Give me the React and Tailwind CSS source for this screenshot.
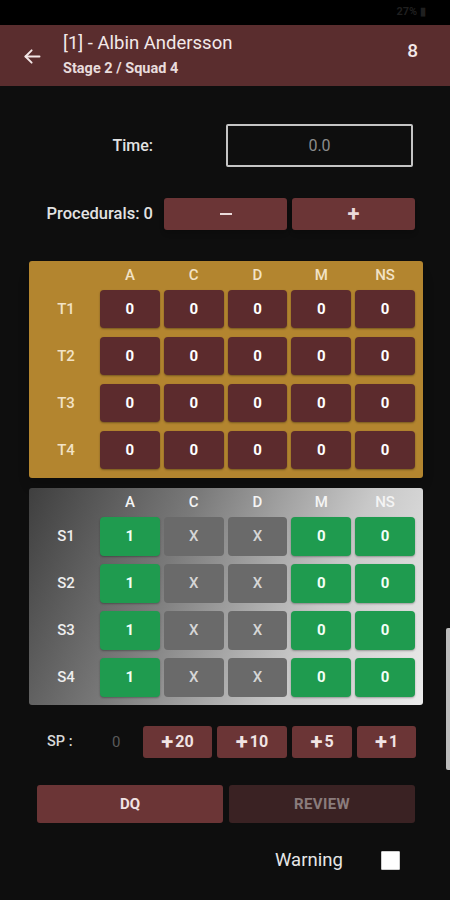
const cols = ['A', 'C', 'D', 'M', 'NS'];

const ArrowLeft = () => (
    <svg width="21" height="21" viewBox="0 0 24 24" fill="none" stroke="#f3e6e6" strokeWidth="2.2" strokeLinecap="round" strokeLinejoin="round">
        <path d="M20 12H4" />
        <path d="M11 5l-7 7 7 7" />
    </svg>
);

const App = () => {
    const targets = ['T1', 'T2', 'T3', 'T4'];
    const steel = ['S1', 'S2', 'S3', 'S4'];

    return (
        <div className="w-[450px] h-[900px] bg-[#0e0e0e] overflow-hidden relative font-['Roboto',sans-serif] text-white">
            {/* status bar */}
            <div className="h-[25px] bg-black flex items-center justify-end pr-[24px]">
                <span className="text-[11px] font-bold text-[#1f1f1f]">27% ▮</span>
            </div>

            {/* toolbar */}
            <div className="h-[61px] bg-[#5a2d2e] flex items-center">
                <div className="w-[63px] flex justify-center pl-[1px] pt-[1px]">
                    <ArrowLeft />
                </div>
                <div className="flex-1 flex flex-col -mt-[2px]">
                    <span className="text-[18.5px] font-normal leading-[24px] text-[#f3e9e9]">[1] - Albin Andersson</span>
                    <span className="text-[14.5px] font-bold leading-[18px] mt-[5px] text-[#e8dcdc]">Stage 2 / Squad 4</span>
                </div>
                <span className="text-[19px] font-medium pr-[32px] pb-[8px] text-[#f3e9e9]">8</span>
            </div>

            <div className="pt-[38px]">
                {/* time */}
                <div className="flex items-center">
                    <span className="w-[153px] text-right text-[16px] font-medium text-[#e2e2e2]">Time:</span>
                    <div className="ml-[73px] w-[187px] h-[43px] border-2 border-[#c4c4c4] rounded-[2px] flex items-center justify-center text-[16px] text-[#8c8c8c]">
                        0.0
                    </div>
                </div>

                {/* procedurals */}
                <div className="flex items-center mt-[31px]">
                    <span className="w-[153px] text-right text-[16.5px] font-medium text-[#e2e2e2] whitespace-nowrap">Procedurals: 0</span>
                    <div className="ml-[11px] flex gap-[5px]">
                        <button className="w-[123px] h-[32px] rounded-[3px] bg-[#6b3536] flex items-center justify-center shadow-md">
                            <span className="block w-[12px] h-[2.5px] bg-[#eadada]" />
                        </button>
                        <button className="w-[123px] h-[32px] rounded-[3px] bg-[#6b3536] flex items-center justify-center text-[22px] font-bold text-[#eadada] leading-none shadow-md">
                            +
                        </button>
                    </div>
                </div>

                {/* targets panel */}
                <div className="mt-[31px] ml-[29px] w-[394px] h-[217px] rounded-[3px] bg-[#b3852f] pr-[8px] pb-[9px] grid grid-cols-[67px_repeat(5,1fr)] grid-rows-[20px_repeat(4,38px)] gap-x-1 gap-y-[9px] shadow-lg">
                    <div />
                    {cols.map((c) => (
                        <div key={c} className="flex items-center justify-center text-[15px] font-medium text-[#f2e2c6] pt-[9px]">{c}</div>
                    ))}
                    {targets.map((t) => (
                        <Row key={t} label={t} labelColor="text-[#f2e2c6]">
                            {cols.map((c) => (
                                <div key={c} className="rounded-[4px] bg-[#5c2b2d] flex items-center justify-center text-[15px] font-bold text-white shadow-[0_1px_2px_rgba(0,0,0,0.35)]">
                                    0
                                </div>
                            ))}
                        </Row>
                    ))}
                </div>

                {/* steel panel */}
                <div className="mt-[10px] ml-[29px] w-[394px] h-[217px] rounded-[3px] bg-[linear-gradient(115deg,#3f3f3f_0%,#7a7a7a_35%,#c8c8c8_70%,#ececec_100%)] pr-[8px] pb-[8px] grid grid-cols-[67px_repeat(5,1fr)] grid-rows-[21px_repeat(4,39px)] gap-x-1 gap-y-2">
                    <div />
                    {cols.map((c) => (
                        <div key={c} className="flex items-center justify-center text-[15px] font-medium text-[#f4f4f4] pt-[8px]">{c}</div>
                    ))}
                    {steel.map((s) => (
                        <Row key={s} label={s} labelColor="text-[#eeeeee]">
                            {cols.map((c, i) => {
                                const off = i === 1 || i === 2;
                                return (
                                    <div
                                        key={c}
                                        className={
                                            off
                                                ? 'rounded-[4px] bg-[#6a6a6a] flex items-center justify-center text-[15px] font-medium text-[#d6d6d6]'
                                                : 'rounded-[4px] bg-[#1f9b4f] flex items-center justify-center text-[15px] font-bold text-[#f2fff6] shadow-[0_1px_2px_rgba(0,0,0,0.3)]'
                                        }
                                    >
                                        {off ? 'X' : i === 0 ? '1' : '0'}
                                    </div>
                                );
                            })}
                        </Row>
                    ))}
                </div>

                {/* special penalties */}
                <div className="mt-[21px] flex items-center h-[32px]">
                    <span className="ml-[47px] w-[65px] text-[14.5px] font-medium text-[#d8d8d8]">SP :</span>
                    <span className="w-[31px] text-[15px] text-[#5a5a5a]">0</span>
                    <div className="flex gap-[5px]">
                        {[['+20', 'w-[69px]'], ['+10', 'w-[70px]'], ['+5', 'w-[60px]'], ['+1', 'w-[59px]']].map(([t, w]) => (
                            <button key={t} className={`${w} h-[32px] rounded-[3px] bg-[#6b3536] flex items-center justify-center text-[16px] font-bold text-[#f1e4e4]`}>
                                <span className="text-[22px] leading-none mr-[2px] -mt-[1px]">+</span>
                                {t.slice(1)}
                            </button>
                        ))}
                    </div>
                </div>

                {/* dq / review */}
                <div className="mt-[27px] ml-[37px] flex gap-[6px]">
                    <button className="w-[186px] h-[38px] rounded-[3px] bg-[#6b3536] text-[15px] font-bold text-[#f0e2e2]">DQ</button>
                    <button className="w-[186px] h-[38px] rounded-[3px] bg-[#3a2223] text-[15px] font-bold tracking-wide text-[#8a7c7c]">REVIEW</button>
                </div>

                {/* warning */}
                <div className="mt-[24px] flex items-center">
                    <span className="ml-[275px] w-[106px] text-[18.5px] text-[#e6e6e6]">Warning</span>
                    <span className="w-[19px] h-[19px] bg-white rounded-[1px] border border-[#cfcfcf]" />
                </div>
            </div>

            {/* scroll indicator */}
            <div className="absolute right-0 top-[628px] w-[4px] h-[142px] bg-[#bdbdbd] rounded-l-[2px]" />
        </div>
    );
};

const Row = ({ label, labelColor, children }) => (
    <>
        <div className={`flex items-center justify-center pl-[7px] text-[15px] font-medium ${labelColor}`}>{label}</div>
        {children}
    </>
);

export default App;
